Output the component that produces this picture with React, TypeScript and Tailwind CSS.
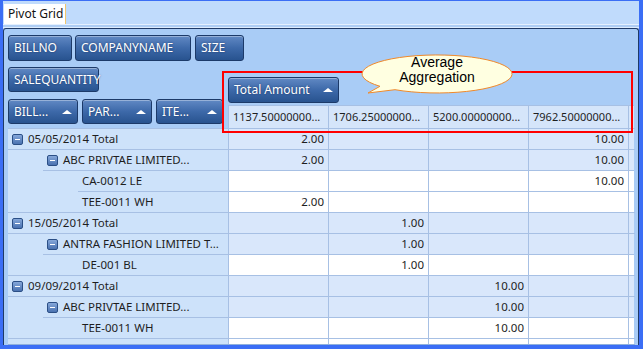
import React from 'react';

type Row = { level: 1 | 2 | 3; label: string; vals: string[]; last?: boolean };

const rows: Row[] = [
  { level: 1, label: '05/05/2014 Total', vals: ['2.00', '', '', '10.00'] },
  { level: 2, label: 'ABC PRIVTAE LIMITED...', vals: ['2.00', '', '', '10.00'] },
  { level: 3, label: 'CA-0012 LE', vals: ['', '', '', '10.00'] },
  { level: 3, label: 'TEE-0011 WH', vals: ['2.00', '', '', ''], last: true },
  { level: 1, label: '15/05/2014 Total', vals: ['', '1.00', '', ''] },
  { level: 2, label: 'ANTRA FASHION LIMITED T...', vals: ['', '1.00', '', ''] },
  { level: 3, label: 'DE-001 BL', vals: ['', '1.00', '', ''], last: true },
  { level: 1, label: '09/09/2014 Total', vals: ['', '', '10.00', ''] },
  { level: 2, label: 'ABC PRIVTAE LIMITED...', vals: ['', '', '10.00', ''] },
  { level: 3, label: 'TEE-0011 WH', vals: ['', '', '10.00', ''], last: true },
  { level: 1, label: '', vals: ['', '', '', ''] },
];

const colHeads = ['1137.50000000...', '1706.25000000...', '5200.00000000...', '7962.50000000...'];

const Arrow = () => <span className="w-0 h-0 border-x-[5px] border-b-[4px] border-x-transparent border-b-white" />;

const FieldButton = ({ label, w, arrow, h = 'h-[25px]' }: { label: string; w: string; arrow?: boolean; h?: string }) => (
  <div
    className={`${w} ${h} shrink-0 flex items-center justify-between pl-[5px] pr-[5px] rounded-[3px] border border-[#1c3a69] bg-gradient-to-b from-[#6189c4] via-[#3d69a9] to-[#28538f] text-white text-[12px] shadow-[inset_0_1px_0_rgba(255,255,255,0.35)]`}
  >
    <span className="whitespace-nowrap [text-shadow:0_0_2px_rgba(10,30,70,0.6)]">{label}</span>
    {arrow && <Arrow />}
  </div>
);

const Minus = () => (
  <span className="inline-flex shrink-0 w-[11px] h-[11px] items-center justify-center rounded-[2px] border border-[#2b4f86] bg-gradient-to-b from-[#86a8da] to-[#4a72b0]">
    <span className="w-[5px] h-[1px] bg-white" />
  </span>
);

const GridRow = ({ r }: { r: Row }) => {
  const leaf = r.level === 3;
  const valBg = leaf || r.label === '' ? 'bg-white' : 'bg-[#d9e7fb]';
  const indent = r.level === 2 ? 'w-[35px]' : r.level === 3 ? 'w-[70px]' : 'w-0';
  const fullLine = r.level === 1 || r.last;
  return (
    <div className={`flex h-[21px] shrink-0 ${fullLine ? 'border-b border-[#a7c0e4]' : ''}`}>
      <div className="w-[220px] flex bg-[#cde2fa]">
        <div className={`${indent} shrink-0`} />
        <div className={`flex-1 flex items-center gap-[5px] pl-[4px] whitespace-nowrap ${fullLine ? '' : 'border-b border-[#a7c0e4]'}`}>
          {r.level !== 3 && r.label !== '' && <Minus />}
          <span>{r.label}</span>
        </div>
      </div>
      {r.vals.map((v, i) => (
        <div
          key={i}
          className={`w-[100px] flex items-center justify-end pr-[4px] border-l border-[#a7c0e4] ${valBg} ${fullLine ? '' : 'border-b'}`}
        >
          {v}
        </div>
      ))}
      <div className={`w-[6px] border-l border-[#a7c0e4] ${valBg} ${fullLine ? '' : 'border-b'}`} />
    </div>
  );
};

export default function App() {
  return (
    <div className="relative w-[643px] h-[349px] bg-[#3b6ef5] pt-[1px] pl-[3px] overflow-hidden font-['Noto_Sans','Open_Sans',sans-serif] text-[11.5px] text-[#1e1e1e]">
      <div className="w-[636px] h-[344px] flex flex-col bg-[#c0dbfc]">
        <div className="h-[23px] shrink-0 flex items-end pl-[1px]">
          <div className="h-[20px] w-[62px] bg-white border-r border-[#f1c76e] pl-[4px] flex items-center text-[12px] text-[#111]">
            Pivot Grid
          </div>
        </div>
        <div className="h-[1px] shrink-0 bg-[#e4f0ff]" />
        <div className="h-[2px] shrink-0 bg-[#aecdf4]" />
        <div className="h-[1px] shrink-0 bg-[#dcecff]" />

        <div className="flex-1 min-h-0 flex flex-col border border-b-0 border-[#1f3a66] rounded-t-[3px] bg-[#a9ccf6] pl-[4px] pr-[3px]">
          <div className="flex gap-[3px] pt-[6px] shrink-0">
            <FieldButton label="BILLNO" w="w-[64px]" h="h-[26px]" />
            <FieldButton label="COMPANYNAME" w="w-[116px]" h="h-[26px]" />
            <div className="ml-[1px]">
              <FieldButton label="SIZE" w="w-[49px]" h="h-[26px]" />
            </div>
          </div>

          <div className="flex h-[67px] shrink-0">
            <div className="w-[220px] flex flex-col">
              <div className="mt-[6px]">
                <FieldButton label="SALEQUANTITY" w="w-[91px]" />
              </div>
              <div className="mt-[7px] flex gap-[4px]">
                <FieldButton label="BILL..." w="w-[70px]" arrow />
                <FieldButton label="PAR..." w="w-[70px]" arrow />
                <FieldButton label="ITE..." w="w-[67px]" arrow />
              </div>
            </div>
            <div className="flex flex-col">
              <div className="mt-[16px]">
                <FieldButton label="Total Amount" w="w-[111px]" h="h-[26px]" arrow />
              </div>
              <div className="mt-[2px] flex h-[23px] border-t border-[#a7c0e4] bg-[#d5e5fa]">
                {colHeads.map((c) => (
                  <div key={c} className="w-[100px] flex items-center pl-[4px] border-l border-[#a7c0e4] whitespace-nowrap overflow-hidden text-[11px]">
                    {c}
                  </div>
                ))}
                <div className="w-[6px] border-l border-[#a7c0e4]" />
              </div>
            </div>
          </div>

          <div className="flex-1 min-h-0 overflow-hidden flex flex-col border-t border-[#a7c0e4]">
            {rows.map((r, i) => (
              <GridRow key={i} r={r} />
            ))}
          </div>
          <div className="h-[1px] shrink-0 bg-[#8fb0dc]" />
        </div>
      </div>

      {/* highlight box */}
      <div className="absolute left-[222px] top-[71px] w-[411px] h-[62px] border-2 border-[#ff0000]" />

      {/* callout */}
      <svg className="absolute left-[355px] top-[50px]" width="165" height="50" viewBox="0 0 165 50">
        <path d="M25 36.3 A75 19 0 1 1 40 39.7 L13 43 Z" fill="#ffffe1" stroke="#f0892a" strokeWidth="1" />
      </svg>
      <div className="absolute left-[362px] top-[55px] w-[150px] text-center leading-[15px] text-[14px] text-black font-['Liberation_Sans',Arial,sans-serif]">
        Average
        <br />
        Aggregation
      </div>
    </div>
  );
}
